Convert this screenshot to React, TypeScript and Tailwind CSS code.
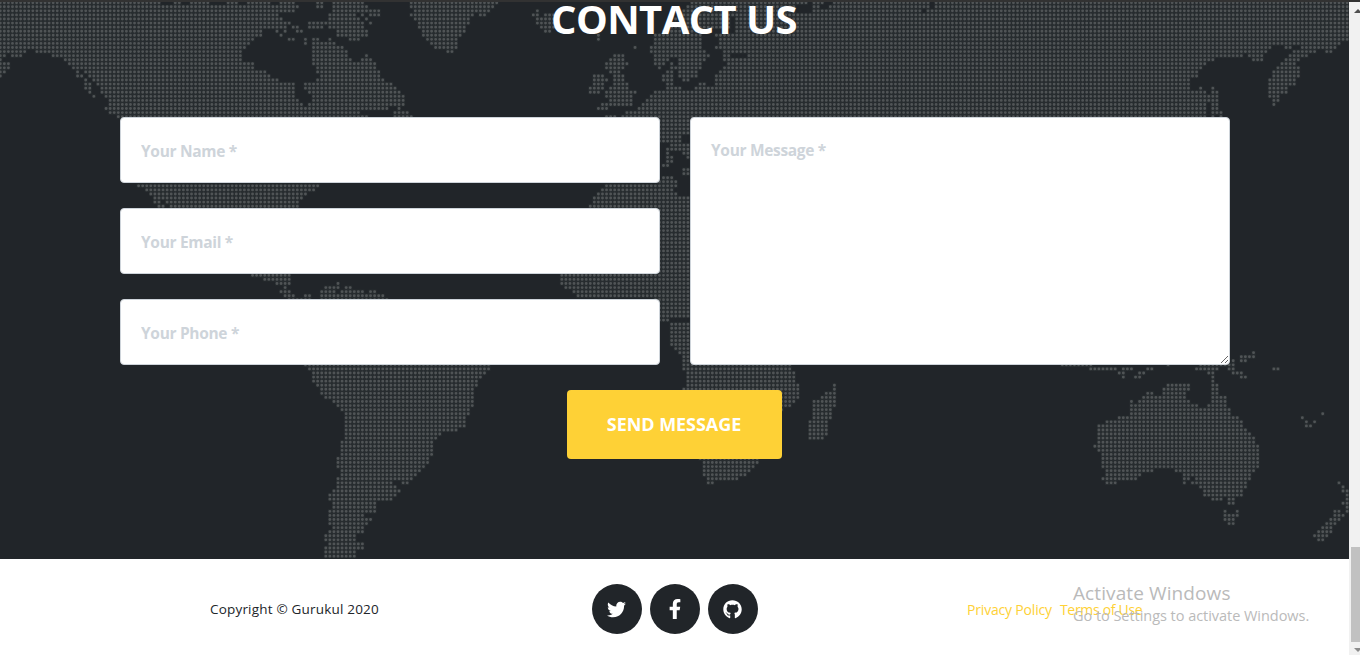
import { FaFacebookF, FaGithub, FaTwitter } from 'react-icons/fa';

// The map is drawn on a dot lattice in a 4047 x 1677 view box.
const PITCH = 12.207;
const ORIGIN_X = 0.8;
const ORIGIN_Y = 8.2;

type Region = { left: number; row: number; spans: string };

// Each region lists its rows from `row` downwards, separated by "/".
// A row holds the spans of land as start-end distances from `left`.
const regions: Region[] = [
  {
    // Alaska, Canada, Greenland (west coast)
    left: 0,
    row: 0,
    spans:
      '0-475 525-540 575-625 685-710 740-810 845-885 952-967 1000-1090 1235-1493/' +
      '0-895 952-967 1000-1100 1235-1480/' +
      '0-885 1000-1070 1090-1137 1245-1468/' +
      '0-835 990-1062 1087-1087 1110-1137 1235-1420 1440-1455/' +
      '0-825 845-845 990-1075 1100-1100 1245-1407/' +
      '0-825 845-870 928-980 990-1087 1112-1112 1257-1407/' +
      '0-825 845-860 880-893 928-965 990-1090 1257-1395/' +
      '0-785 833-833 857-857 893-905 1015-1100 1270-1395/' +
      '0-785 845-845 1015-1100 1270-1383/' +
      '0-760 868-880 918-918 940-955 990-990 1050-1075 1282-1370/' +
      '0-750 918-918 940-1005 1295-1370/' +
      '0-738 940-1030 1307-1370/' +
      '0-75 108-725 940-1042 1343-1358/' +
      '0-15 40-65 160-725 945-1042 1100-1100/' +
      '0-0 195-725 940-1045 1087-1112/' +
      '0-28 208-760 940-1125/' +
      '0-28 220-760 952-1125/' +
      '0-15 232-232 257-797 952-1137/' +
      '0-0 232-245 270-810 960-1137/' +
      '257-257 281-835 952-1150/' +
      '257-270 293-883 918-1172/' +
      '257-270 305-883 918-1185/' +
      '270-270 305-883 930-1197/' +
      '281-281 318-883 940-1210/' +
      '330-893 940-1210/' +
      '330-905 930-1210/' +
      '318-1162 1197-1197/' +
      '330-1075 1185-1222/' +
      '355-1100 1185-1235/' +
      '380-1200',
  },
  {
    // Iceland
    left: 1350,
    row: 2,
    spans: '262-262/250-262 290-310/262-315/262-325/275-325/287-300//445-445',
  },
  {
    // Europe and Asia
    left: 1350,
    row: 0,
    spans:
      '720-1068 1093-1118 1155-1435 1460-2697/' +
      '710-1035 1095-1105 1135-1435 1460-2697/' +
      '700-1030 1090-1410 1440-2697/' +
      '690-1040 1060-2697/' +
      '680-835 860-2697/' +
      '670-830 860-2697/' +
      '660-830 860-2697/' +
      '640-770 860-2697/' +
      '445-445 615-755 798-2697/' +
      '445-445 615-755 810-2695/' +
      '615-755 810-2670/' +
      '555-555 605-755 798-798 810-2455 2510-2525 2555-2655/' +
      '605-765 825-2445 2535-2595 2630-2645/' +
      '492-518 615-775 825-835 893-2375 2400-2435 2520-2565/' +
      '480-518 615-657 685-765 823-2290 2410-2435 2510-2545/' +
      '470-530 615-645 670-670 685-750 835-2265 2497-2535/' +
      '470-518 630-630 665-745 823-2253 2485-2545/' +
      '480-510 650-665 690-740 810-2240 2472-2545/' +
      '432-460 492-518 640-665 690-740 798-2240 2472-2545/' +
      '432-470 492-518 640-665 700-715 798-2215 2460-2535/' +
      '432-460 492-530 650-665 750-765 798-2215 2460-2535/' +
      '420-460 480-530 650-690 740-2220 2253-2253 2290-2290 2460-2510/' +
      '420-445 470-555 615-2265 2290-2300 2460-2510/' +
      '470-543 600-2300 2460-2485/' +
      '480-543 590-2300 2472-2485/' +
      '457-543 580-2265 2290-2300 2472-2472/' +
      '445-470 567-2265 2290-2300/' +
      '530-2265 2290-2313/' +
      '470-495 518-2265 2290-2290 2313-2313',
  },
  {
    // Mediterranean and West Africa
    left: 1620,
    row: 29,
    spans:
      '350-450/350-450/350-450/350-450/350-420/350-420/395-450/385-450/385-385 432-445/385-395 445-445/' +
      '385-395/370-385/432-445/432-445/370-395/360-408/200-408/187-395/175-408/163-450/163-450/150-450/' +
      '350-450/350-450/350-450/350-450/350-450/350-450/350-450/350-450/350-450/350-450/350-450/350-450/' +
      '350-450/350-450/350-450/350-450/65-450/65-450/65-450/78-450/102-450/114-450/350-450/350-450/' +
      '350-450/350-450/350-450/350-385/395-450/395-450/395-450/395-450/395-450/395-450/408-450/420-450/' +
      '432-450/432-450/432-750/432-750/444-762/444-762/444-762/444-774/432-774/432-774/432-774/432-762/' +
      '432-750/432-726',
  },
  {
    // Southern tip of Africa
    left: 1620,
    row: 112,
    spans: '480-655/492-652/492-640/492-628/492-615/505-590/505-517',
  },
  {
    // Madagascar
    left: 1620,
    row: 94,
    spans:
      '883-883/883-883/858-883/846-883/822-883/822-883/822-870/822-870/822-870/810-858/810-858/810-858/' +
      '810-858/810-846',
  },
  {
    // United States
    left: 300,
    row: 45,
    spans: '115-655/140-640/152-615/163-605/163-175 200-595/175-190 212-595',
  },
  {
    // Central America and the Caribbean coast
    left: 300,
    row: 67,
    spans:
      '457-570/492-570/530-570 714-714/555-555 677-714 738-750/543-567 665-705 726-790 812-825/' +
      '555-580 615-630 665-850/567-630 665-865',
  },
  {
    // South America
    left: 840,
    row: 89,
    spans:
      '75-628/88-628/100-615/100-603/100-590/112-590/125-578/125-578/137-578/163-578/175-578/187-566/' +
      '200-566/200-554/200-554/200-554/200-530/200-480/200-468/187-456/187-456/187-456/187-456/175-444/' +
      '175-444/175-432/187-420/187-405/175-395/175-333 370-383/175-346/163-358/150-346/150-333/163-285/' +
      '163-285/150-285/150-250/150-273/150-260/163-248/150-248/137-224/137-224/150-248/137-248/137-224/' +
      '137-224',
  },
  {
    // Indonesia, Australia and New Zealand
    left: 3120,
    row: 86,
    spans:
      '641-641/604-641/580-580 604-616/68-155 385-385 480-580/152-225 250-275 323-335 470-530 568-580 702-714/' +
      '238-250 300-311 505-520 580-604/250-250 287-300 519-519 604-616/519-519/385-446 519-531/' +
      '373-446 519-531/323-335 373-434 519-531/311-434 519-556/275-275 299-446 519-556/275-470 507-556/' +
      '275-568/275-568 848-848/238-592 787-787/201-604 799-799 823-823/177-604 799-811/177-616/177-628/' +
      '177-641/177-641/165-653/177-653/189-653/189-653/189-653/189-653/201-335 409-641/201-299 434-628/' +
      '189-287 434-446 470-628/201-226 434-434 458-616 897-897/482-616 909-909/494-604 909-921/' +
      '494-604 921-921/519-543 568-580 921-921/568-580 909-921/921-921/555-555 592-592 885-897 921-921/' +
      '555-592 885-909/555-580 872-897/568-580 860-885/848-872/836-872/823-860/836-848',
  },
];

function mapPath() {
  const cells = new Set<string>();
  for (const { left, row, spans } of regions) {
    spans.split('/').forEach((line, i) => {
      for (const span of line.split(' ').filter(Boolean)) {
        const [from, to] = span
          .split('-')
          .map((n) => Math.round((Number(n) + left - ORIGIN_X) / PITCH));
        for (let col = from; col <= to; col++) cells.add(`${col},${row + i}`);
      }
    });
  }
  return [...cells]
    .map((cell) => {
      const [col, row] = cell.split(',').map(Number);
      return `M${(ORIGIN_X + col * PITCH).toFixed(1)} ${(ORIGIN_Y + row * PITCH).toFixed(1)}h.1`;
    })
    .join('');
}

const landPath = mapPath();

function WorldMap() {
  return (
    <svg
      className="absolute inset-0 h-[559px] w-[1349px]"
      viewBox="0 0 4047 1677"
      fill="none"
      aria-hidden="true"
    >
      <path d={landPath} stroke="#272c2f" strokeWidth="12.2" strokeLinecap="square" />
      <path d={landPath} stroke="#505456" strokeWidth="8.6" strokeLinecap="round" />
    </svg>
  );
}

const fieldClass =
  "block w-full rounded-[4px] border border-[#ced4da] bg-white pr-[19px] pl-[20px] font-['Open_Sans',sans-serif] text-[15.5px] font-bold tracking-[-0.32px] text-[#495057] placeholder:text-[#ced4da] placeholder:opacity-100 outline-none";

function ContactSection() {
  return (
    <section className="relative h-[559px] shrink-0 overflow-hidden bg-[#212529]">
      <WorldMap />
      <div className="relative flex flex-col items-center">
        <div className="h-[2px] w-full bg-[#323232]" />
        <h2 className="-mt-[8px] mr-[1px] h-[50px] text-[40px] leading-[50px] font-bold tracking-[-0.6px] whitespace-nowrap text-white">
          CONTACT US
        </h2>
        <form className="mt-[73px] flex w-full flex-col items-center pr-[119px] pl-[120px]">
          <div className="grid w-full grid-cols-2 gap-[30px]">
            <div className="flex flex-col gap-[25px]">
              <input className={`${fieldClass} h-[66px] pt-[1px]`} placeholder="Your Name *" />
              <input className={`${fieldClass} h-[66px] pt-[1px]`} placeholder="Your Email *" />
              <input className={`${fieldClass} h-[66px] pt-[1px]`} placeholder="Your Phone *" />
            </div>
            <textarea
              className={`${fieldClass} h-[248px] resize-y pt-[20px] leading-[24px]`}
              placeholder="Your Message *"
            />
          </div>
          <button
            type="button"
            className="mt-[25px] mr-[2px] h-[69px] w-[215px] rounded-[4px] bg-[#fed136] text-[18px] font-bold tracking-[-0.05px] whitespace-nowrap text-white"
          >
            SEND MESSAGE
          </button>
        </form>
      </div>
    </section>
  );
}

const socialClass =
  'flex size-[50px] items-center justify-center rounded-full bg-[#212529] pr-[1px] text-white';

function Footer() {
  return (
    <footer className="flex h-[96px] items-center bg-white pt-[4px] text-[#212529]">
      <div className="w-[590px] pl-[210px] text-[13.5px] tracking-[0.19px] whitespace-nowrap">
        Copyright © Gurukul 2020
      </div>
      <div className="flex w-[170px] gap-[8px] pl-[2px]">
        <a className={socialClass} aria-label="Twitter">
          <FaTwitter size={19} />
        </a>
        <a className={socialClass} aria-label="Facebook">
          <FaFacebookF size={20} />
        </a>
        <a className={socialClass} aria-label="GitHub">
          <FaGithub size={19} />
        </a>
      </div>
      <div className="flex gap-[8px] pl-[207px] text-[14px] whitespace-nowrap text-[#fed136]">
        <a className="font-medium tracking-[-0.18px]">Privacy Policy</a>
        <a className="font-medium tracking-[-0.3px]">Terms of Use</a>
      </div>
    </footer>
  );
}

function Scrollbar() {
  return (
    <div className="flex w-[11px] shrink-0 flex-col border-t-2 border-[#323232] bg-[#f1f1f1]">
      <svg className="h-[15px] w-[11px]" viewBox="0 0 11 15">
        <path d="M5 11 9 7l4 4z" fill="#505050" />
      </svg>
      <div className="mt-[530px] ml-[2px] h-[95px] bg-[#c1c1c1]" />
      <svg className="h-[13px] w-[11px]" viewBox="0 0 11 13">
        <path d="M5 6h8l-4 4z" fill="#8b8b8b" />
      </svg>
    </div>
  );
}

export default function App() {
  return (
    <div className="relative flex h-[655px] w-[1360px] overflow-hidden bg-white font-['Open_Sans','Noto_Sans',sans-serif]">
      <div className="flex w-[1349px] shrink-0 flex-col">
        <ContactSection />
        <Footer />
      </div>
      <Scrollbar />
      <div className="absolute top-[580px] left-[1073px] whitespace-nowrap text-[#bababa]">
        <div className="text-[19px] leading-[26px] tracking-[0.1px]">Activate Windows</div>
        <div className="text-[14.5px] leading-[20px] tracking-[-0.04px]">
          Go to Settings to activate Windows.
        </div>
      </div>
    </div>
  );
}
